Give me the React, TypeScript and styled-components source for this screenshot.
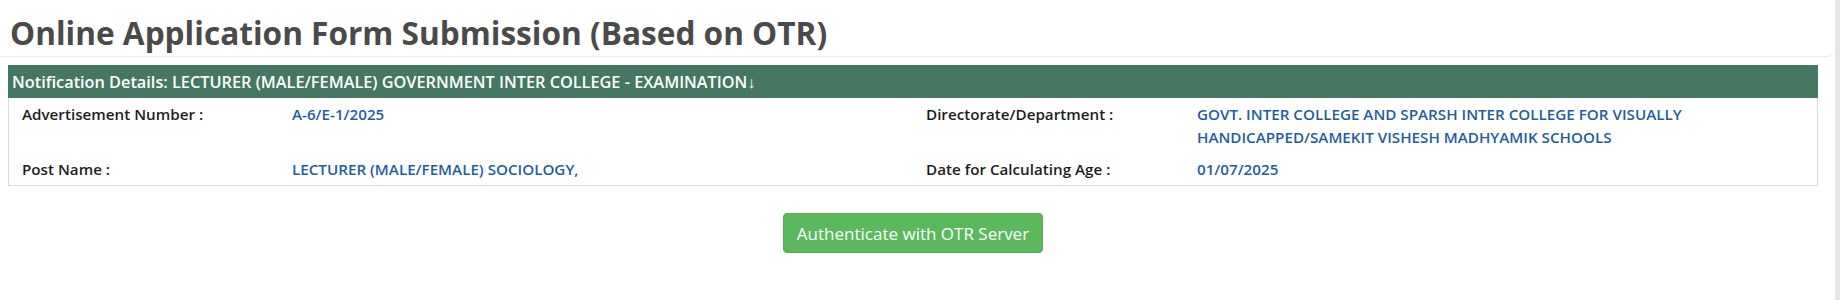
import * as React from 'react'
import styled, { createGlobalStyle } from 'styled-components'

const GlobalStyle = createGlobalStyle`
  html, body {
    margin: 0;
    padding: 0;
    background: #fff;
    font-family: "Open Sans", "Noto Sans", sans-serif;
  }
`

const Page = styled.div`
  display: flex;
  width: 1840px;
  height: 300px;
  overflow: hidden;
`

const Main = styled.div`
  flex: 1;
  display: flex;
  flex-direction: column;
`

const Scrollbar = styled.div`
  width: 5px;
  background: #e6e6e6;
`

const TitleBar = styled.div`
  box-sizing: border-box;
  height: 57px;
  padding: 12px 10px 0;
  border-bottom: 1px solid #ececec;
  border-bottom-right-radius: 6px;
  margin-right: 2px;
  box-shadow: 0 1px 1px rgba(0, 0, 0, 0.02);
`

const Title = styled.h1`
  margin: 0;
  font-size: 31.6px;
  line-height: 42px;
  font-weight: 700;
  color: #4a4a4a;
`

const Panel = styled.section`
  margin: 8px 17px 0 8px;
`

const PanelHeading = styled.div`
  background: #457762;
  color: #fff;
  height: 33px;
  padding: 0 4px;
  display: flex;
  align-items: center;
  font-size: 16.3px;
  font-weight: 600;
`

const Arrow = styled.span`
  font-weight: 400;
`

const PanelBody = styled.div`
  border: 1px solid #dcdcdc;
  border-top: none;
  padding: 0 13px;
`

const Row = styled.div`
  display: grid;
  grid-template-columns: 270px 634px 271px 1fr;
  padding: 5px 0 4px;
  font-size: 15.2px;
  line-height: 23px;
  font-weight: 600;
`

const Label = styled.div`
  color: #1d1d1d;
`

const Value = styled.div`
  color: #1f5e9e;
  max-width: 545px;
`

const Actions = styled.div`
  display: flex;
  justify-content: center;
  margin: 27px 17px 0 8px;
`

const Button = styled.button`
  width: 260px;
  height: 40px;
  border: 1px solid #53ad53;
  border-radius: 4px;
  background: #5cb85c;
  color: #fff;
  font-family: "Open Sans", sans-serif;
  font-size: 17px;
  cursor: pointer;
`

export default function App() {
  return (
    <>
      <GlobalStyle />
      <Page>
        <Main>
          <TitleBar>
            <Title>Online Application Form Submission (Based on OTR)</Title>
          </TitleBar>
          <Panel>
            <PanelHeading>
              Notification Details: LECTURER (MALE/FEMALE) GOVERNMENT INTER COLLEGE - EXAMINATION
              <Arrow>↓</Arrow>
            </PanelHeading>
            <PanelBody>
              <Row>
                <Label>Advertisement Number :</Label>
                <Value>A-6/E-1/2025</Value>
                <Label>Directorate/Department :</Label>
                <Value>
                  GOVT. INTER COLLEGE AND SPARSH INTER COLLEGE FOR VISUALLY HANDICAPPED/SAMEKIT
                  VISHESH MADHYAMIK SCHOOLS
                </Value>
              </Row>
              <Row>
                <Label>Post Name :</Label>
                <Value>LECTURER (MALE/FEMALE) SOCIOLOGY,</Value>
                <Label>Date for Calculating Age :</Label>
                <Value>01/07/2025</Value>
              </Row>
            </PanelBody>
          </Panel>
          <Actions>
            <Button>Authenticate with OTR Server</Button>
          </Actions>
        </Main>
        <Scrollbar />
      </Page>
    </>
  )
}
